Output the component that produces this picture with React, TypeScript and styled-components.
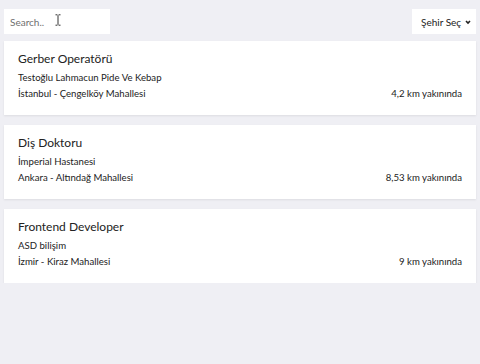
import React from "react";
import styled, { createGlobalStyle } from "styled-components";

const Global = createGlobalStyle`
  html, body { margin: 0; padding: 0; background: #efeff4; }
  body { font-family: "Lato", "Noto Sans", sans-serif; color: #222; }
  * { box-sizing: border-box; }
`;

const Page = styled.div`
  padding: 9px 4px 0 4px;
  display: flex;
  flex-direction: column;
  gap: 7px;
`;

const Toolbar = styled.div`
  display: flex;
  justify-content: space-between;
  align-items: center;
`;

const SearchWrap = styled.div`
  position: relative;
  width: 106px;
  height: 25px;
`;

const SearchInput = styled.input`
  width: 100%;
  height: 100%;
  border: none;
  background: #fff;
  padding: 0 6px;
  font-family: inherit;
  font-size: 10px;
  color: #222;
  outline: none;
  &::placeholder { color: #6f6f6f; }
`;

const Cursor = styled.svg`
  position: absolute;
  left: 51px;
  top: 5px;
`;

const SelectBox = styled.div`
  width: 64px;
  height: 25px;
  background: #fff;
  display: flex;
  align-items: center;
  justify-content: space-between;
  padding: 0 4px 0 9px;
  font-size: 10px;
  color: #222;
`;

const List = styled.div`
  display: flex;
  flex-direction: column;
  gap: 10px;
`;

const Card = styled.div`
  background: #fff;
  height: 74px;
  padding: 10px 14px 0 14px;
  box-shadow: 0 1px 2px rgba(0, 0, 0, 0.08);
`;

const Title = styled.div`
  font-size: 12px;
  line-height: 16px;
  margin-bottom: 3px;
`;

const Line = styled.div`
  font-size: 9.6px;
  line-height: 16px;
`;

const Row = styled.div`
  display: flex;
  justify-content: space-between;
  font-size: 9.6px;
  line-height: 16px;
`;

const jobs = [
  { title: "Gerber Operatörü", company: "Testoğlu Lahmacun Pide Ve Kebap", place: "İstanbul - Çengelköy Mahallesi", dist: "4,2 km yakınında" },
  { title: "Diş Doktoru", company: "İmperial Hastanesi", place: "Ankara - Altındağ Mahallesi", dist: "8,53 km yakınında" },
  { title: "Frontend Developer", company: "ASD bilişim", place: "İzmir - Kiraz Mahallesi", dist: "9 km yakınında" },
];

export default function App() {
  return (
    <>
      <Global />
      <Page>
        <Toolbar>
          <SearchWrap>
            <SearchInput placeholder="Search.." />
            <Cursor width="6" height="12" viewBox="0 0 6 12">
              <path d="M0.5 0.8 H2.4 M3.6 0.8 H5.5 M3 1.2 V10.8 M0.5 11.2 H2.4 M3.6 11.2 H5.5" fill="none" stroke="#333" strokeWidth="1" />
            </Cursor>
          </SearchWrap>
          <SelectBox>
            <span>Şehir Seç</span>
            <svg width="8" height="8" viewBox="0 0 8 8">
              <path d="M2 3 L4 5 L6 3" fill="none" stroke="#222" strokeWidth="1.6" />
            </svg>
          </SelectBox>
        </Toolbar>
        <List>
          {jobs.map((j) => (
            <Card key={j.title}>
              <Title>{j.title}</Title>
              <Line>{j.company}</Line>
              <Row>
                <span>{j.place}</span>
                <span>{j.dist}</span>
              </Row>
            </Card>
          ))}
        </List>
      </Page>
    </>
  );
}
